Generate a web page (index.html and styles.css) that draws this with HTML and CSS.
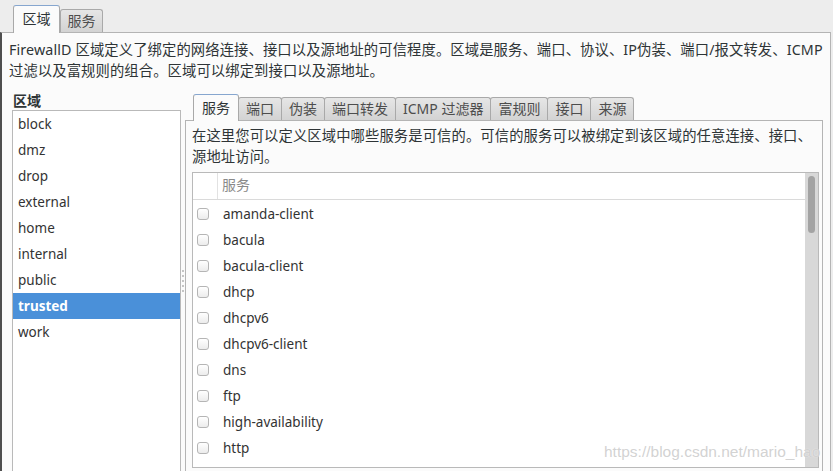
FILE: index.html
```html
<!DOCTYPE html>
<html lang="zh-CN">
<head>
<meta charset="utf-8">
<title>firewall-config</title>
<link rel="stylesheet" href="styles.css">
</head>
<body>
<div class="window">
  <div class="tabs top-tabs">
    <div class="tab active">区域</div>
    <div class="tab">服务</div>
  </div>
  <div class="pane outer-pane">
    <p class="desc">FirewallD 区域定义了绑定的网络连接、接口以及源地址的可信程度。区域是服务、端口、协议、IP伪装、端口/报文转发、ICMP<br>过滤以及富规则的组合。区域可以绑定到接口以及源地址。</p>
    <div class="split">
      <div class="zones">
        <div class="zones-label">区域</div>
        <ul class="zone-list">
          <li>block</li>
          <li>dmz</li>
          <li>drop</li>
          <li>external</li>
          <li>home</li>
          <li>internal</li>
          <li>public</li>
          <li class="selected">trusted</li>
          <li>work</li>
        </ul>
      </div>
      <div class="handle"><span></span><span></span><span></span><span></span><span></span></div>
      <div class="inner">
        <div class="tabs inner-tabs">
          <div class="tab active">服务</div>
          <div class="tab">端口</div>
          <div class="tab">伪装</div>
          <div class="tab">端口转发</div>
          <div class="tab">ICMP 过滤器</div>
          <div class="tab">富规则</div>
          <div class="tab">接口</div>
          <div class="tab">来源</div>
        </div>
        <div class="pane inner-pane">
          <p class="desc">在这里您可以定义区域中哪些服务是可信的。可信的服务可以被绑定到该区域的任意连接、接口、<br>源地址访问。</p>
          <div class="svc">
            <div class="svc-table">
              <div class="svc-head"><span class="col-check"></span><span class="col-name">服务</span></div>
              <div class="svc-row"><span class="col-check"><span class="check"></span></span><span class="svc-name">amanda-client</span></div>
              <div class="svc-row"><span class="col-check"><span class="check"></span></span><span class="svc-name">bacula</span></div>
              <div class="svc-row"><span class="col-check"><span class="check"></span></span><span class="svc-name">bacula-client</span></div>
              <div class="svc-row"><span class="col-check"><span class="check"></span></span><span class="svc-name">dhcp</span></div>
              <div class="svc-row"><span class="col-check"><span class="check"></span></span><span class="svc-name">dhcpv6</span></div>
              <div class="svc-row"><span class="col-check"><span class="check"></span></span><span class="svc-name">dhcpv6-client</span></div>
              <div class="svc-row"><span class="col-check"><span class="check"></span></span><span class="svc-name">dns</span></div>
              <div class="svc-row"><span class="col-check"><span class="check"></span></span><span class="svc-name">ftp</span></div>
              <div class="svc-row"><span class="col-check"><span class="check"></span></span><span class="svc-name">high-availability</span></div>
              <div class="svc-row"><span class="col-check"><span class="check"></span></span><span class="svc-name">http</span></div>
            </div>
            <div class="scrollbar"><div class="thumb"></div></div>
          </div>
        </div>
      </div>
    </div>
  </div>
  <div class="watermark">https://blog.csdn.net/mario_hao</div>
</div>
</body>
</html>
```
FILE: styles.css
```css
* { box-sizing: border-box; }
html, body { margin: 0; padding: 0; }
body {
  width: 833px;
  height: 471px;
  overflow: hidden;
  background: #ededed;
  font-family: "Noto Sans", "Noto Sans CJK SC", sans-serif;
  font-size: 14px;
  color: #2e3436;
}
.window { position: relative; height: 471px; overflow: hidden; }

/* tabs */
.tabs { display: flex; align-items: flex-end; position: relative; z-index: 1; }
.tab {
  border: 1px solid #a9a9a9;
  border-bottom: none;
  border-radius: 3px 3px 0 0;
  background: linear-gradient(#e6e6e6, #d3d3d3);
  color: #4d4d4d;
  white-space: nowrap;
  text-align: center;
}
.tab.active {
  background: #fbfbfb;
  border-top-color: #86a6cf;
  color: #2e3436;
}
.top-tabs { height: 33px; margin-bottom: -1px; padding-left: 13px; }
.top-tabs .tab { height: 23px; margin-bottom: 1px; width: 43px; line-height: 21px; }
.top-tabs .tab.active { height: 28px; margin-bottom: 0; width: 47px; line-height: 25px; }

.inner-tabs { height: 31px; margin-bottom: -1px; padding-left: 8px; }
.inner-tabs .tab { height: 23px; margin-bottom: 1px; padding: 0 7px; line-height: 21px; margin-left: -1px; }
.inner-tabs .tab.active { height: 27px; margin-bottom: 0; padding: 0 8px; line-height: 25px; margin-left: 0; }

/* panes */
.pane { background: #fbfbfb; }
.outer-pane {
  width: 831px;
  height: 440px;
  border-top: 1px solid #b4b4b4;
  border-left: 2px solid #4f4f4f;
  border-right: 1px solid #b4b4b4;
  padding: 6px 7px 0 7px;
}
.desc {
  margin: 0;
  font-size: 14.3px;
  letter-spacing: 0.12px;
  line-height: 21px;
  white-space: nowrap;
  color: #2e3436;
}

.split { display: flex; height: 380px; margin: 10px 0 0 3px; }

.zones { width: 169px; display: flex; flex-direction: column; }
.zones-label { font-weight: bold; line-height: 19px; height: 19px; padding-left: 1px; flex: none; }
.zone-list {
  list-style: none;
  margin: 0;
  padding: 0;
  background: #fff;
  border: 1px solid #b9b9b9;
  border-bottom: none;
  height: 372px;
  flex: none;
}
.zone-list li { height: 26px; line-height: 26px; padding-left: 5px; font-size: 13.5px; color: #333; }
.zone-list li.selected { background: #4a90d9; color: #fff; font-weight: bold; }

.handle { width: 4px; display: flex; flex-direction: column; align-items: center; justify-content: center; gap: 3px; }
.handle span { width: 2px; height: 2px; background: #c4c4c4; }

.inner { width: 638px; display: flex; flex-direction: column; }
.inner-pane {
  border: 1px solid #b4b4b4;
  border-bottom: none;
  padding: 4px 3px 0 6px;
  height: 360px;
}

/* service list */
.svc {
  margin-top: 5px;
  height: 296px;
  border: 1px solid #b9b9b9;
  background: #fff;
  display: flex;
  overflow: hidden;
}
.svc-table { flex: 1; }
.svc-head { display: flex; height: 27px; margin-bottom: 1px; border-bottom: 1px solid #dadada; }
.svc-head .col-check { border-right: 1px solid #e2e2e2; }
.col-check { width: 25px; flex: none; display: flex; align-items: center; }
.col-name { padding-left: 4px; line-height: 24px; color: #8a8a8a; }
.svc-row { display: flex; height: 26px; align-items: center; }
.check {
  width: 12px;
  height: 12px;
  margin-left: 4px;
  border: 1px solid #b5b5b5;
  border-radius: 3px;
  background: linear-gradient(#ffffff, #ececec);
}
.svc-name { padding-left: 5px; font-size: 13.5px; color: #333; }

.scrollbar { width: 13px; flex: none; background: #d8d8d8; padding: 3px 0 0 3px; }
.thumb { width: 7px; height: 57px; border-radius: 4px; background: #a3a3a3; }

.watermark {
  position: absolute;
  left: 604px;
  top: 443px;
  font-family: "Liberation Sans", Arial, sans-serif;
  font-size: 15.5px;
  color: rgba(205, 205, 205, 0.9);
  text-shadow: 0 0 1px rgba(255, 255, 255, 0.8);
  white-space: nowrap;
}
```
